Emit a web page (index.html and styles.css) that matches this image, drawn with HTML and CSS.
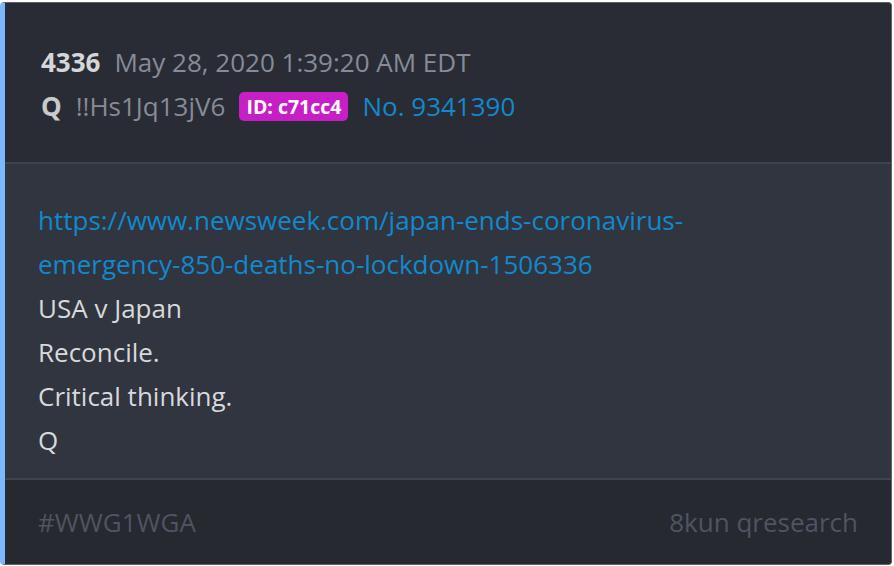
FILE: index.html
```html
<!DOCTYPE html>
<html lang="en">
<head>
    <meta charset="UTF-8">
    <meta name="viewport" content="width=device-width, initial-scale=1.0">
    <title>4336</title>
    <link rel="stylesheet" href="styles.css">
</head>
<body>
    <div class="post">
        <div class="post-header">
            <div class="meta-line">
                <span class="post-num">4336</span>
                <span class="post-date">May 28, 2020 1:39:20 AM EDT</span>
            </div>
            <div class="meta-line">
                <span class="author">Q</span>
                <span class="trip">!!Hs1Jq13jV6</span>
                <span class="user-id">ID: c71cc4</span>
                <a class="post-link" href="#">No. 9341390</a>
            </div>
        </div>
        <div class="post-body">
            <a class="body-link" href="#">https://www.newsweek.com/japan-ends-coronavirus-<br>emergency-850-deaths-no-lockdown-1506336</a>
            <p>USA v Japan</p>
            <p>Reconcile.</p>
            <p>Critical thinking.</p>
            <p>Q</p>
        </div>
        <div class="post-footer">
            <span>#WWG1WGA</span>
            <span>8kun qresearch</span>
        </div>
    </div>
</body>
</html>
```

FILE: styles.css
```css
body {
    font-family: "Open Sans", sans-serif;
    background-color: #ffffff;
    margin: 0;
    padding: 2px 0 0 0;
}

.post {
    width: 892px;
    height: 563px;
    box-sizing: border-box;
    border: 1px solid #5c616c;
    border-left: 5px solid #7db8ff;
    border-radius: 4px;
    overflow: hidden;
    display: flex;
    flex-direction: column;
    background-color: #30353f;
}

.post-header {
    background-color: #292c35;
    height: 161px;
    box-sizing: border-box;
    padding: 37px 36px 0;
    border-bottom: 2px solid #3f434c;
}

.meta-line {
    display: flex;
    align-items: center;
    gap: 14px;
    font-size: 26px;
    height: 44px;
}

.post-num {
    font-weight: 700;
    color: #d6d6d8;
}

.post-date,
.trip {
    color: #878b97;
}

.author {
    font-weight: 700;
    color: #c9cacd;
}

.user-id {
    background-color: #c71fc6;
    color: #ffffff;
    font-weight: 700;
    font-size: 19.5px;
    line-height: 29px;
    padding: 0 7px;
    border-radius: 5px;
}

.post-link,
.body-link {
    color: #1388cc;
    text-decoration: none;
}

.post-body {
    flex: 1;
    padding: 34px 33px 0;
    font-size: 26px;
    line-height: 44px;
    color: #d8d9dc;
    border-bottom: 2px solid #3f434c;
}

.post-body p {
    margin: 0;
}

.post-footer {
    background-color: #262930;
    height: 84px;
    padding: 0 33px;
    display: flex;
    justify-content: space-between;
    align-items: center;
    font-size: 26px;
    color: #4f5461;
}
```
